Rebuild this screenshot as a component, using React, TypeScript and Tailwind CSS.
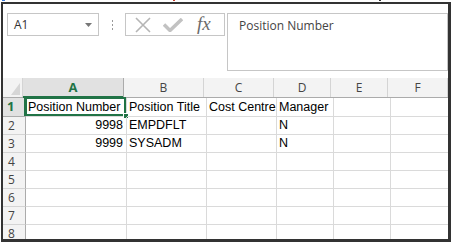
import React from 'react';

const cols = [
  { key: 'A', w: 101 },
  { key: 'B', w: 80 },
  { key: 'C', w: 70 },
  { key: 'D', w: 57 },
  { key: 'E', w: 57 },
  { key: 'F', w: 60 },
];

const rows: { n: number; h: number; cells: string[] }[] = [
  { n: 1, h: 19, cells: ['Position Number', 'Position Title', 'Cost Centre', 'Manager', '', ''] },
  { n: 2, h: 18, cells: ['9998', 'EMPDFLT', '', 'N', '', ''] },
  { n: 3, h: 18, cells: ['9999', 'SYSADM', '', 'N', '', ''] },
  { n: 4, h: 18, cells: ['', '', '', '', '', ''] },
  { n: 5, h: 18, cells: ['', '', '', '', '', ''] },
  { n: 6, h: 18, cells: ['', '', '', '', '', ''] },
  { n: 7, h: 18, cells: ['', '', '', '', '', ''] },
  { n: 8, h: 18, cells: ['', '', '', '', '', ''] },
];

const uiFont = { fontFamily: '"Open Sans", "Noto Sans", sans-serif' };
const cellFont = { fontFamily: '"Liberation Sans", Arial, sans-serif' };

function FormulaBar() {
  return (
    <div className="flex items-start pt-[9px] pl-[4px] h-[74px]">
      {/* name box */}
      <div
        className="w-[92px] h-[23px] border border-[#c6c6c6] flex items-center justify-between pl-[6px] pr-[6px] text-[12px] text-[#333]"
        style={uiFont}
      >
        <span>A1</span>
        <svg width="7" height="4" viewBox="0 0 7 4">
          <path d="M0 0 L7 0 L3.5 4 Z" fill="#777" />
        </svg>
      </div>
      {/* dotted separator */}
      <div className="w-[26px] h-[23px] flex flex-col items-center justify-center gap-[2px]">
        <span className="w-[1px] h-[2px] bg-[#999]" />
        <span className="w-[1px] h-[2px] bg-[#999]" />
        <span className="w-[1px] h-[2px] bg-[#999]" />
      </div>
      {/* cancel / enter / fx */}
      <div className="w-[100px] h-[23px] border border-[#c6c6c6] flex items-center pl-[9px]">
        <svg width="16" height="16" viewBox="0 0 16 16">
          <path d="M1 1 L15 15 M15 1 L1 15" stroke="#b5b5b5" strokeWidth="1.6" fill="none" />
        </svg>
        <svg width="20" height="14" viewBox="0 0 20 14" className="ml-[12px]">
          <path d="M1 6.5 L7 12.5 L19 1" stroke="#c2c2c2" strokeWidth="3.5" fill="none" />
        </svg>
        <span
          className="ml-[14px] text-[19px] italic leading-none text-[#6b6b6b] -mt-[3px]"
          style={{ fontFamily: '"Liberation Serif", "Times New Roman", serif' }}
        >
          fx
        </span>
      </div>
      {/* formula input */}
      <div
        className="ml-[2px] flex-1 h-[58px] border border-[#c6c6c6] pl-[11px] pt-[3px] text-[12px] text-[#444]"
        style={uiFont}
      >
        Position Number
      </div>
    </div>
  );
}

function Grid() {
  return (
    <div className="flex flex-col">
      {/* header */}
      <div className="flex h-[20px] bg-[#f3f3f3] border-b border-[#ababab]" style={uiFont}>
        <div className="w-[23px] border-r border-[#d4d4d4] flex items-end justify-end pr-[2px] pb-[2px]">
          <svg width="9" height="12" viewBox="0 0 9 12">
            <path d="M9 0 L9 12 L0 12 Z" fill="#d6d6d6" />
          </svg>
        </div>
        {cols.map(c => (
          <div
            key={c.key}
            style={{ width: c.w }}
            className={
              c.key === 'A'
                ? 'relative shrink-0 border-r border-[#ababab] bg-[#e1e1e1] text-[#217346] font-bold text-[13px] flex items-center justify-center pt-[1px]'
                : 'shrink-0 border-r border-[#d4d4d4] text-[#444] text-[12px] flex items-center justify-center pt-[1px]'
            }
          >
            {c.key}
            {c.key === 'A' && <span className="absolute left-0 right-0 -bottom-[1px] h-[2px] bg-[#217346]" />}
          </div>
        ))}
      </div>
      {rows.map(r => (
        <div key={r.n} className="flex" style={{ height: r.h }}>
          <div
            className={
              r.n === 1
                ? 'relative w-[23px] shrink-0 bg-[#e1e1e1] border-b border-[#ababab] text-[#217346] font-bold text-[13px] flex items-center pl-[4px]'
                : 'w-[23px] shrink-0 bg-[#f3f3f3] border-b border-[#d4d4d4] border-r border-r-[#ababab] text-[#444] text-[12px] flex items-center pl-[5px]'
            }
            style={uiFont}
          >
            {r.n}
            {r.n === 1 && <span className="absolute top-0 bottom-0 right-0 w-[2px] bg-[#217346]" />}
          </div>
          {r.cells.map((v, i) => {
            const numeric = /^\d+$/.test(v);
            return (
              <div
                key={i}
                style={{ width: cols[i].w, ...cellFont }}
                className={
                  'relative shrink-0 border-r border-b border-[#dadada] text-[12.5px] text-black flex items-center whitespace-nowrap ' +
                  (numeric ? 'justify-end pr-[3px]' : 'pl-[2px]')
                }
              >
                {v}
                {r.n === 1 && i === 0 && (
                  <>
                    <span className="absolute -left-[1px] -top-[1px] right-0 bottom-0 border-2 border-[#217346]" />
                    <span className="absolute -right-[3px] -bottom-[3px] w-[6px] h-[6px] bg-[#217346] border border-white" />
                  </>
                )}
              </div>
            );
          })}
        </div>
      ))}
    </div>
  );
}

export default function App() {
  return (
    <div className="w-[452px] h-[244px] bg-white relative overflow-hidden">
      <div className="flex h-[2px]">
        <span className="ml-[2px] w-[3px] h-[1px] bg-[#3b78d8]" />
        <span className="ml-[168px] w-[2px] h-[1px] bg-[#c0392b]" />
        <span className="ml-[204px] w-[2px] h-[1px] bg-[#333]" />
      </div>
      <div className="ml-[1px] w-[450px] h-[240px] border-t-2 border-l-2 border-r-[3px] border-b-[3px] border-[#333] overflow-hidden">
        <FormulaBar />
        <Grid />
      </div>
    </div>
  );
}
